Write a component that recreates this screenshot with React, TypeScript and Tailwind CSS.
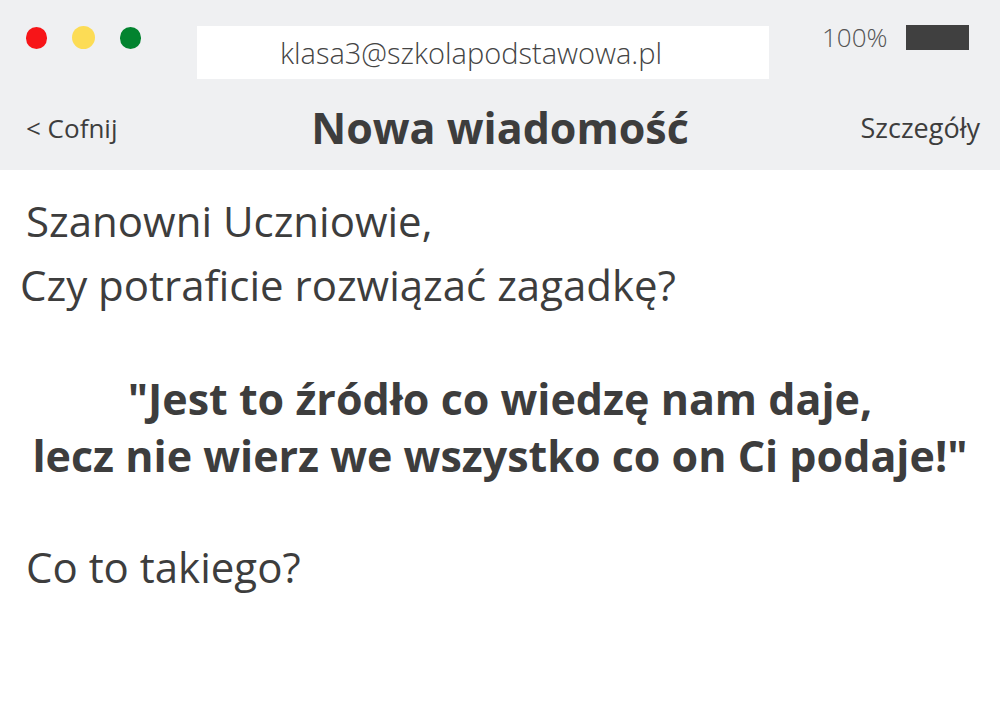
import React from 'react';

const App: React.FC = () => {
  return (
    <div className="w-[1000px] h-[709px] bg-white text-[#3d3d3d] font-['Open_Sans',sans-serif] overflow-hidden">
      {/* Top bar */}
      <div className="bg-[#eff0f2] h-[170px] flex flex-col">
        <div className="flex items-start h-[92px] pt-[26px]">
          <div className="flex items-center gap-[25px] pl-[26px] w-[197px]">
            <span className="w-[21px] h-[22px] rounded-full bg-[#f71518]" />
            <span className="w-[23px] h-[23px] rounded-full bg-[#fcdc55]" />
            <span className="w-[21px] h-[22px] rounded-full bg-[#02832f]" />
          </div>
          <div className="w-[572px] h-[53px] bg-white flex items-center justify-center pr-[24px] text-[29px] font-light text-[#444]">
            klasa3@szkolapodstawowa.pl
          </div>
          <div className="flex items-center ml-[53px] gap-[19px] -mt-[2px]">
            <span className="text-[26px] font-light leading-none text-[#555] w-[65px]">100%</span>
            <span className="w-[63px] h-[25px] bg-[#404040]" />
          </div>
        </div>
        <div className="flex items-center justify-between px-[20px] h-[72px]">
          <span className="text-[26px] w-[150px] pl-[6px]">&lt; Cofnij</span>
          <span className="text-[43px] font-bold">Nowa wiadomość</span>
          <span className="text-[27px] w-[150px] text-right">Szczegóły</span>
        </div>
      </div>

      {/* Message body */}
      <div className="pt-[22px] text-[42px]">
        <p className="pl-[26px] leading-[58px]">Szanowni Uczniowie,</p>
        <p className="pl-[20px] leading-[70px]">Czy potraficie rozwiązać zagadkę?</p>
        <p className="mt-[50px] text-center font-bold text-[43px] leading-[57px]">
          "Jest to źródło co wiedzę nam daje,
          <br />
          lecz nie wierz we wszystko co on Ci podaje!"
        </p>
        <p className="pl-[26px] mt-[54px] leading-[58px]">Co to takiego?</p>
      </div>
    </div>
  );
};

export default App;
